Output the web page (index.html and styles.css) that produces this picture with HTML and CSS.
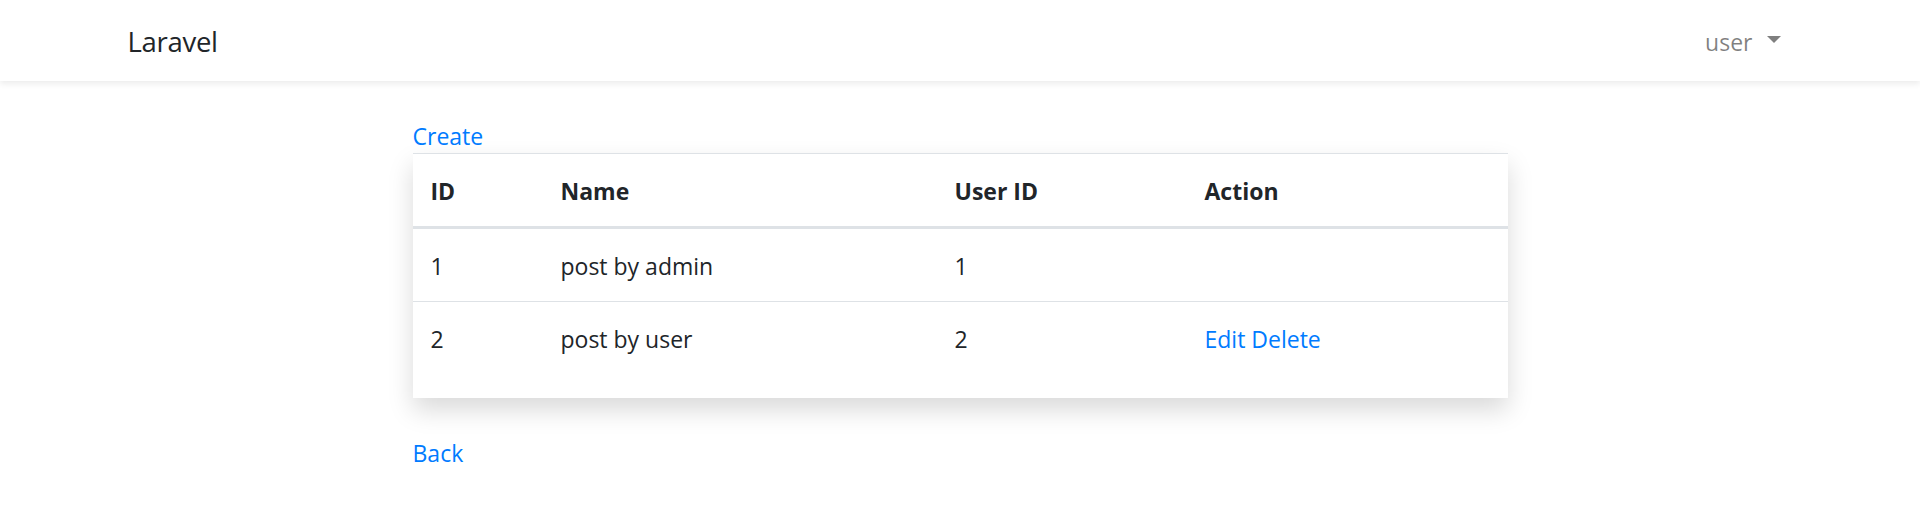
FILE: index.html
```html
<!DOCTYPE html>
<html lang="en">
<head>
<meta charset="utf-8">
<title>Laravel</title>
<link rel="stylesheet" href="styles.css">
</head>
<body>
<nav class="navbar">
  <div class="container nav-inner">
    <a class="brand" href="#">Laravel</a>
    <a class="nav-user" href="#">user<span class="caret"></span></a>
  </div>
</nav>
<main class="main">
  <div class="content">
    <a class="link" href="#">Create</a>
    <div class="card">
      <table class="table">
        <colgroup>
          <col class="c-id">
          <col class="c-name">
          <col class="c-user">
          <col class="c-action">
        </colgroup>
        <thead>
          <tr><th>ID</th><th>Name</th><th>User ID</th><th>Action</th></tr>
        </thead>
        <tbody>
          <tr><td>1</td><td>post by admin</td><td>1</td><td></td></tr>
          <tr><td>2</td><td>post by user</td><td>2</td><td><a class="link" href="#">Edit</a> <a class="link" href="#">Delete</a></td></tr>
        </tbody>
      </table>
    </div>
    <div class="back"><a class="link" href="#">Back</a></div>
  </div>
</main>
</body>
</html>
```

FILE: styles.css
```css
html, body {
  margin: 0;
  padding: 0;
}
body {
  background: #ffffff;
  color: #212529;
  font-family: "Open Sans", "Noto Sans", sans-serif;
  font-size: 23px;
  line-height: 36px;
}
.navbar {
  height: 81px;
  background: #fff;
  box-shadow: 0 3px 6px rgba(0, 0, 0, 0.075);
  position: relative;
  z-index: 1;
}
.container {
  width: 1710px;
  margin: 0 auto;
  padding: 0 22.5px;
  box-sizing: border-box;
}
.nav-inner {
  height: 81px;
  display: flex;
  align-items: center;
  justify-content: space-between;
}
.brand {
  font-size: 27.5px;
  line-height: 45px;
  letter-spacing: -0.3px;
  color: #212529;
  text-decoration: none;
  padding-top: 2px;
}
.nav-user {
  color: rgba(0, 0, 0, 0.5);
  text-decoration: none;
  padding-right: 12px;
  padding-top: 2px;
  display: flex;
  align-items: center;
}
.caret {
  display: inline-block;
  width: 0;
  height: 0;
  margin-left: 14px;
  border-top: 7px solid rgba(0, 0, 0, 0.5);
  border-left: 7px solid transparent;
  border-right: 7px solid transparent;
  margin-top: -5px;
}
.main {
  padding-top: 37px;
}
.content {
  width: 1095px;
  margin-left: 412.5px;
}
.link {
  color: #007bff;
  text-decoration: none;
}
.card {
  background: #fff;
  box-shadow: 0 12px 24px rgba(0, 0, 0, 0.15);
  padding-bottom: 24px;
  margin-top: -1px;
}
.table {
  width: 100%;
  border-collapse: collapse;
}
.c-id { width: 130px; }
.c-name { width: 394px; }
.c-user { width: 250px; }
.c-action { width: auto; }
.table th,
.table td {
  padding: 18px;
  padding-bottom: 17px;
  padding-top: 19px;
  text-align: left;
  vertical-align: top;
  border-top: 1px solid #dee2e6;
}
.table th {
  font-weight: 700;
  border-bottom: 3px solid #dee2e6;
}
.back {
  margin-top: 37px;
}
```
